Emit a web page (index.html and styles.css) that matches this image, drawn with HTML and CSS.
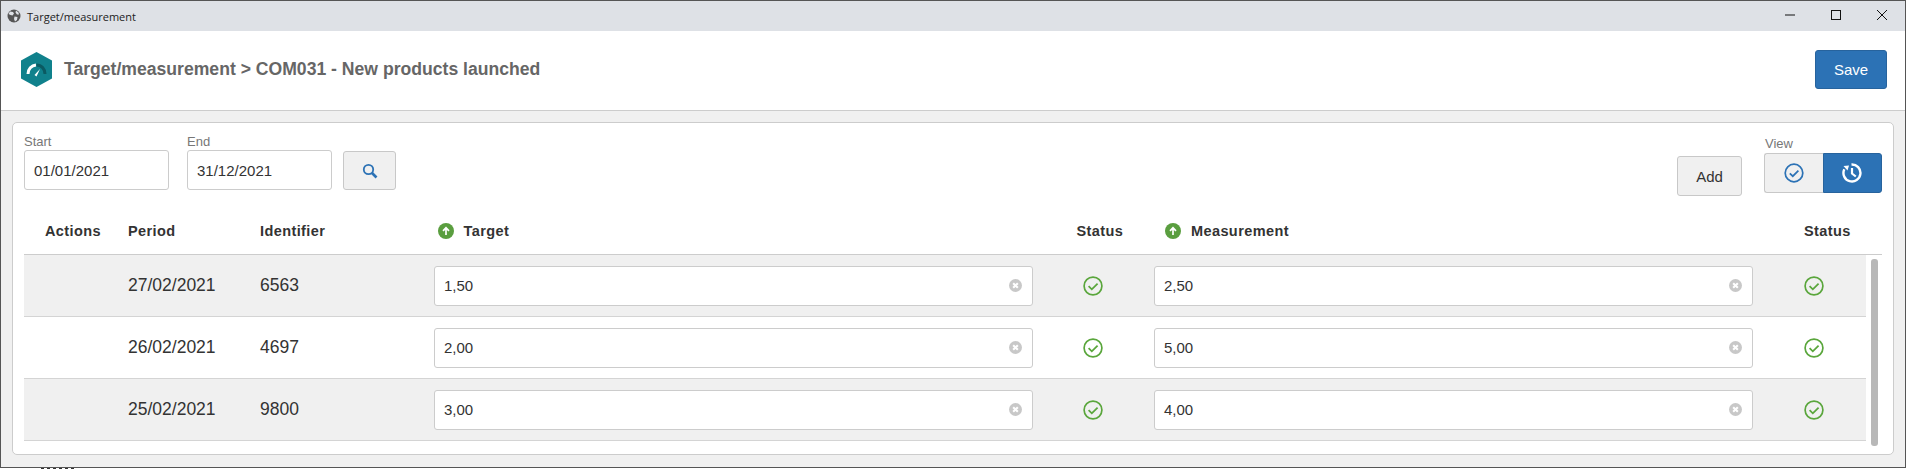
FILE: index.html
```html
<!DOCTYPE html>
<html lang="en">
<head>
  <meta charset="UTF-8" />
  <title>Target/measurement</title>
  <link rel="stylesheet" href="styles.css">
</head>
<body>
  <div class="window">
    <div class="titlebar">
      <svg class="globe" viewBox="0 0 14 14" width="14" height="14">
        <circle cx="7" cy="7" r="6.5" fill="#555"/>
        <path d="M3 2.5 6 3 7 4.5 5.5 6.5 3.5 6 1.5 5ZM7.5 7.5 10.5 8 10 11 8 12.5 7 10ZM9 1.5 11.5 3.5 12 5.5 10 5.5 8.5 3.5Z" fill="#dee1e6"/>
      </svg>
      <span class="titlebar-text">Target/measurement</span>
      <div class="winbtns">
        <svg viewBox="0 0 12 12" width="12" height="12"><path d="M1 6H11" stroke="#111" stroke-width="1"/></svg>
        <svg viewBox="0 0 12 12" width="12" height="12"><rect x="1.5" y="1.5" width="9" height="9" fill="none" stroke="#111"/></svg>
        <svg viewBox="0 0 12 12" width="12" height="12"><path d="M1 1 11 11M11 1 1 11" stroke="#111" stroke-width="1"/></svg>
      </div>
    </div>

    <div class="header">
      <svg class="logo" viewBox="0 0 31 35" width="31" height="35">
        <path d="M15.5 0 31 8.5V26.5L15.5 35 0 26.5V8.5Z" fill="#10818c"/>
        <path d="M7 22C7 17 10.5 13.5 15 13" fill="none" stroke="#fff" stroke-width="3"/>
        <path d="M15.5 13C20.5 13 24 17 24 22" fill="none" stroke="#0b5a62" stroke-width="3"/>
        <path d="M13.5 23 19 17 15.5 24.5Z" fill="#fff"/>
      </svg>
      <h1>Target/measurement &gt; COM031 - New products launched</h1>
      <button class="btn btn-primary save">Save</button>
    </div>

    <div class="content">
      <div class="panel">
        <div class="filters">
          <div class="field">
            <label>Start</label>
            <div class="input date">01/01/2021</div>
          </div>
          <div class="field">
            <label>End</label>
            <div class="input date">31/12/2021</div>
          </div>
          <button class="btn search">
            <svg viewBox="0 0 16 16" width="16" height="16">
              <circle cx="6.5" cy="6.5" r="4.7" fill="none" stroke="#2c72b5" stroke-width="1.8"/>
              <path d="M10 10 14.5 14.5" stroke="#2c72b5" stroke-width="2.6"/>
            </svg>
          </button>
          <button class="btn add">Add</button>
          <div class="view">
            <label>View</label>
            <div class="toggle">
              <button class="toggle-btn">
                <svg viewBox="0 0 20 20" width="20" height="20">
                  <circle cx="10" cy="10" r="8.8" fill="none" stroke="#2c72b5" stroke-width="1.7"/>
                  <path d="M5.8 10.3 8.8 13.2 14.4 7.6" fill="none" stroke="#2c72b5" stroke-width="1.7"/>
                </svg>
              </button>
              <button class="toggle-btn active">
                <svg viewBox="0 0 20 20" width="20" height="20">
                  <path d="M9.5 1.5A8.5 8.5 0 1 1 2.3 6.3" fill="none" stroke="#fff" stroke-width="2.4"/>
                  <path d="M1.5 3 7 2.5 5.5 7.5Z" fill="#fff"/>
                  <path d="M10 5V10.5L13.8 13.5" fill="none" stroke="#fff" stroke-width="2.2"/>
                </svg>
              </button>
            </div>
          </div>
        </div>

        <div class="table-head">
          <span class="th th-actions">Actions</span>
          <span class="th th-period">Period</span>
          <span class="th th-id">Identifier</span>
          <span class="th th-target"><svg class="arrow" viewBox="0 0 16 16" width="16" height="16"><circle cx="8" cy="8" r="8" fill="#5a9e3f"/><path d="M8 12V5M5 7.8 8 4.8 11 7.8" fill="none" stroke="#fff" stroke-width="1.7"/></svg>Target</span>
          <span class="th th-status">Status</span>
          <span class="th th-measure"><svg class="arrow" viewBox="0 0 16 16" width="16" height="16"><circle cx="8" cy="8" r="8" fill="#5a9e3f"/><path d="M8 12V5M5 7.8 8 4.8 11 7.8" fill="none" stroke="#fff" stroke-width="1.7"/></svg>Measurement</span>
          <span class="th th-status2">Status</span>
        </div>

        <div class="table-body">
          <div class="rows" id="rows"></div>
          <div class="scrollbar"></div>
        </div>
      </div>
    </div>
  </div>
  <div class="below"><span class="below-bits"></span></div>

  <script>
    const data = [
      { period: "27/02/2021", id: "6563", target: "1,50", measure: "2,50" },
      { period: "26/02/2021", id: "4697", target: "2,00", measure: "5,00" },
      { period: "25/02/2021", id: "9800", target: "3,00", measure: "4,00" }
    ];
    const clearIcon = '<svg class="clear" viewBox="0 0 14 14" width="13" height="13"><circle cx="7" cy="7" r="7" fill="#c8c8c8"/><path d="M4.5 4.5 9.5 9.5M9.5 4.5 4.5 9.5" stroke="#fff" stroke-width="2.2"/></svg>';
    const okIcon = '<svg viewBox="0 0 20 20" width="20" height="20"><circle cx="10" cy="10" r="8.9" fill="none" stroke="#5aa63c" stroke-width="1.7"/><path d="M5.6 10.2 8.8 13.3 14.6 7.6" fill="none" stroke="#5aa63c" stroke-width="1.8"/></svg>';
    const rows = document.getElementById("rows");

    data.forEach(function (d) {
      const row = document.createElement("div");
      row.className = "row";
      row.innerHTML =
        '<span class="cell-actions"></span>' +
        '<span class="cell-period">' + d.period + '</span>' +
        '<span class="cell-id">' + d.id + '</span>' +
        '<div class="input value"><span>' + d.target + '</span>' + clearIcon + '</div>' +
        '<span class="cell-status">' + okIcon + '</span>' +
        '<div class="input value"><span>' + d.measure + '</span>' + clearIcon + '</div>' +
        '<span class="cell-status">' + okIcon + '</span>';
      rows.appendChild(row);
    });
  </script>
</body>
</html>
```

FILE: styles.css
```css
* {
  box-sizing: border-box;
}
html, body {
  height: 100%;
}
body {
  margin: 0;
  font-family: "Liberation Sans", Arial, sans-serif;
  color: #333;
  background: #fff;
  overflow: hidden;
}
.window {
  height: 468px;
  display: flex;
  flex-direction: column;
  border: 1px solid #555;
  background: #f0f0f0;
}
/* the edge of whatever sits behind the window */
.below {
  height: 1px;
  padding-left: 41px;
  display: flex;
}
.below-bits {
  width: 36px;
  background: repeating-linear-gradient(90deg, #333 0 3px, #fff 3px 6px);
}

/* title bar */
.titlebar {
  height: 30px;
  flex: none;
  display: flex;
  align-items: center;
  padding-left: 6px;
  background: #dee1e6;
}
.titlebar-text {
  margin-left: 6px;
  font-family: "Open Sans", sans-serif;
  font-size: 11px;
  color: #222;
}
.winbtns {
  margin: 0 0 2px auto;
  display: flex;
  gap: 34px;
  padding-right: 17px;
}

/* header */
.header {
  height: 80px;
  flex: none;
  display: flex;
  align-items: center;
  padding: 0 18px 3px 20px;
  background: #fff;
  border-bottom: 1px solid #ccc;
}
.header h1 {
  margin: 0 0 0 12px;
  font-size: 17.6px;
  font-weight: bold;
  color: #666;
}
.logo {
  flex: none;
}

/* buttons */
.btn {
  font-family: inherit;
  font-size: 15px;
  color: #333;
  background: #f0f0f0;
  border: 1px solid #c8c8c8;
  border-radius: 3px;
  padding: 0;
}
.btn-primary {
  color: #fff;
  background: #2c72b5;
  border-color: #27639d;
}
.save {
  width: 72px;
  height: 39px;
  margin-left: auto;
}

/* panel */
.content {
  flex: 1;
  padding: 11px 11px 0;
}
.panel {
  height: 333px;
  padding: 0 11px;
  background: #fff;
  border: 1px solid #ccc;
  border-radius: 5px;
}
.filters {
  height: 96px;
  display: flex;
  align-items: flex-start;
  padding-top: 10px;
}
.field {
  width: 145px;
  margin-right: 18px;
}
.field label, .view label {
  display: block;
  height: 17px;
  font-size: 13px;
  line-height: 17px;
  color: #777;
}
.input {
  height: 40px;
  display: flex;
  align-items: center;
  font-size: 15px;
  background: #fff;
  border: 1px solid #ccc;
  border-radius: 3px;
}
.date {
  padding-left: 9px;
}
.search {
  width: 53px;
  height: 39px;
  margin: 18px 0 0 -7px;
  display: flex;
  align-items: center;
  justify-content: center;
}
.add {
  width: 65px;
  height: 40px;
  margin: 23px 0 0 auto;
}
.view {
  width: 118px;
  margin: 2px 0 0 22px;
}
.view label {
  height: 18px;
  padding-left: 1px;
}
.toggle {
  display: flex;
  height: 40px;
}
.toggle-btn {
  flex: 1;
  display: flex;
  align-items: center;
  justify-content: center;
  padding: 0;
  background: #f0f0f0;
  border: 1px solid #c8c8c8;
  border-right: none;
  border-radius: 3px 0 0 3px;
}
.toggle-btn.active {
  background: #2c72b5;
  border: 1px solid #27639d;
  border-radius: 0 3px 3px 0;
}

/* table */
.table-head {
  height: 24px;
  display: flex;
  align-items: center;
  font-size: 14.5px;
  font-weight: bold;
  letter-spacing: 0.4px;
}
.th {
  flex: none;
  display: flex;
  align-items: center;
}
.th-actions { width: 104px; padding-left: 21px; }
.th-period { width: 132px; }
.th-id { width: 177.5px; }
.th-target { width: 639px; }
.th-status { width: 88.5px; }
.th-measure { width: 639px; }
.arrow {
  margin-right: 10px;
}
.table-body {
  position: relative;
  margin-top: 11px;
  border-top: 1px solid #ccc;
}
.row {
  height: 62px;
  width: 1842px;
  display: flex;
  align-items: center;
  font-size: 17.5px;
  border-bottom: 1px solid #d4d4d4;
}
.row:nth-child(odd) {
  background: #f0f0f0;
}
.cell-actions { width: 104px; flex: none; }
.cell-period { width: 132px; flex: none; }
.cell-id { width: 174px; flex: none; }
.value {
  width: 598.5px;
  flex: none;
  justify-content: space-between;
  padding: 0 10px 0 9px;
}
.cell-status {
  width: 121.5px;
  flex: none;
  display: flex;
  justify-content: center;
}
.cell-status:last-child {
  padding-left: 2px;
}
.scrollbar {
  position: absolute;
  top: 4px;
  left: 1847px;
  width: 7px;
  height: 187px;
  background: #b8b8b8;
  border-radius: 3px;
}
```
